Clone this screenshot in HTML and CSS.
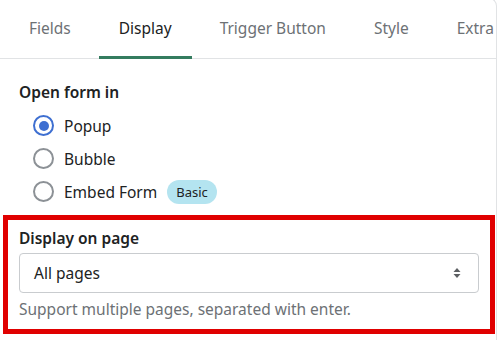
FILE: index.html
```html
<!DOCTYPE html>
<html lang="en">
<head>
    <meta charset="UTF-8">
    <meta name="viewport" content="width=device-width, initial-scale=1.0">
    <title>Form settings</title>
    <link rel="stylesheet" href="styles.css">
</head>
<body>
    <div class="card">
        <div class="tabs">
            <div class="tab">Fields</div>
            <div class="tab active">Display</div>
            <div class="tab">Trigger Button</div>
            <div class="tab">Style</div>
            <div class="tab">Extra</div>
        </div>

        <div class="section">
            <div class="section-title">Open form in</div>
            <label class="radio">
                <span class="radio-dot checked"></span>
                <span>Popup</span>
            </label>
            <label class="radio">
                <span class="radio-dot"></span>
                <span>Bubble</span>
            </label>
            <label class="radio">
                <span class="radio-dot"></span>
                <span>Embed Form</span>
                <span class="badge">Basic</span>
            </label>
        </div>

        <div class="highlight">
            <div class="section-title">Display on page</div>
            <div class="select">
                <span>All pages</span>
                <svg width="8" height="12" viewBox="0 0 8 12">
                    <path d="M4 1 L7.5 5 H0.5 Z" fill="#5c5f62"/>
                    <path d="M4 11 L7.5 7 H0.5 Z" fill="#5c5f62"/>
                </svg>
            </div>
            <div class="help">Support multiple pages, separated with enter.</div>
        </div>
    </div>
</body>
</html>
```

FILE: styles.css
```css
body {
    margin: 0;
    background: #fff;
    font-family: "Noto Sans", "Open Sans", sans-serif;
    color: #202223;
    width: 500px;
    height: 340px;
    overflow: hidden;
}

.card {
    width: 497px;
    height: 342px;
    margin-top: -2px;
    border-right: 1px solid #e1e3e5;
    border-top: 1px solid #e1e3e5;
    border-top-right-radius: 8px;
    box-sizing: border-box;
}

.tabs {
    display: flex;
    gap: 8px;
    padding-left: 9px;
    border-bottom: 1px solid #e1e3e5;
    height: 60px;
    box-sizing: border-box;
}

.tab {
    padding: 0 20px;
    font-size: 15.5px;
    color: #6d7175;
    display: flex;
    align-items: center;
    white-space: nowrap;
    border-bottom: 3px solid transparent;
    margin-bottom: -1px;
}

.tab.active {
    color: #202223;
    border-bottom-color: #347c5f;
}

.section {
    padding: 22px 19px 0;
}

.section-title {
    font-size: 15.5px;
    font-weight: 600;
    margin-bottom: 6px;
}

.radio {
    display: flex;
    align-items: center;
    height: 33px;
    padding-left: 14px;
    font-size: 15.5px;
}

.radio-dot {
    width: 17px;
    height: 17px;
    border: 2px solid #8c9196;
    border-radius: 50%;
    margin-right: 10px;
    position: relative;
}

.radio-dot.checked {
    border-color: #3e6fd1;
}

.radio-dot.checked::after {
    content: "";
    position: absolute;
    left: 3.5px;
    top: 3.5px;
    width: 10px;
    height: 10px;
    border-radius: 50%;
    background: #3e6fd1;
}

.badge {
    margin-left: 10px;
    background: #b4e4f0;
    border-radius: 12px;
    padding: 3px 9px;
    font-size: 13px;
    color: #202223;
}

.highlight {
    margin: 7px 0 0 3px;
    width: 492px;
    height: 119px;
    border: 5px solid #e00000;
    box-sizing: border-box;
    padding: 7px 11px 0 11px;
}

.highlight .section-title {
    margin-bottom: 4px;
}

.select {
    height: 40px;
    border: 1px solid #c9cccf;
    border-radius: 4px;
    box-sizing: border-box;
    display: flex;
    align-items: center;
    justify-content: space-between;
    padding: 0 17px 0 14px;
    font-size: 15.5px;
}

.help {
    margin-top: 5px;
    font-size: 15.5px;
    color: #6d7175;
}
```
